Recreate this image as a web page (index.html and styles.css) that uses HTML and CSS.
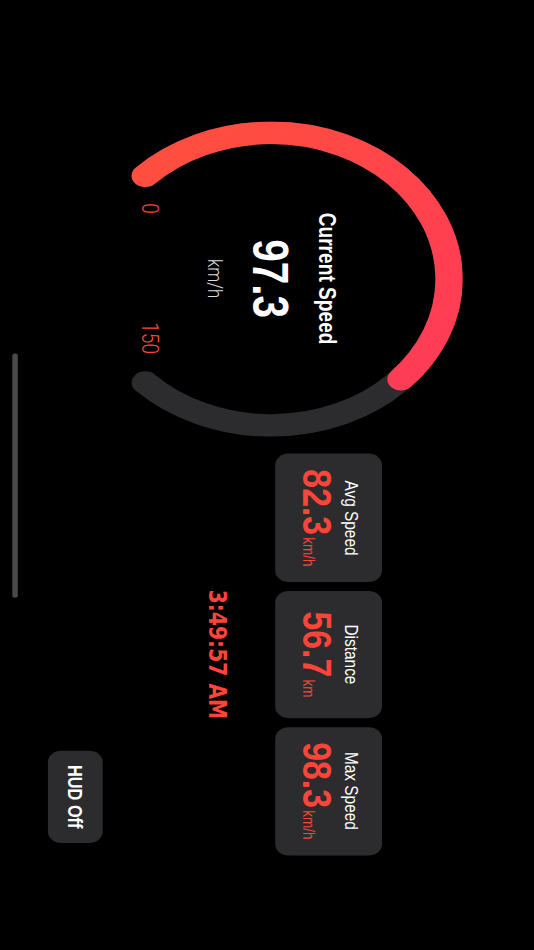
FILE: index.html
```html
<!DOCTYPE html>
<html lang="en">
<head>
<meta charset="utf-8">
<title>Speed HUD</title>
<link rel="stylesheet" href="styles.css">
</head>
<body>
<div class="stage">
<div class="frame">
  <div class="gauge">
    <svg class="gauge-svg" viewBox="0 0 280 280" preserveAspectRatio="none">
      <defs>
        <linearGradient id="redGrad" gradientUnits="userSpaceOnUse" x1="48" y1="232" x2="224" y2="40">
          <stop offset="0" stop-color="#FF4E3F"/>
          <stop offset="1" stop-color="#FF3C55"/>
        </linearGradient>
      </defs>
      <path d="M 48.08 231.92 A 130 130 0 1 1 231.92 231.92" fill="none" stroke="#2C2C2E" stroke-width="20" stroke-linecap="round"/>
      <path d="M 48.08 231.92 A 130 130 0 1 1 231.92 231.92" fill="none" stroke="url(#redGrad)" stroke-width="20" stroke-linecap="round" pathLength="100" stroke-dasharray="66 200"/>
    </svg>
    <div class="gauge-text">
      <div class="g-title">Current Speed</div>
      <div class="g-value">97.3</div>
      <div class="g-unit">km/h</div>
      <div class="g-scale"><span>0</span><span>150</span></div>
    </div>
  </div>
  <div class="side">
    <div class="cards">
      <div class="card">
        <div class="c-label">Avg Speed</div>
        <div class="c-row"><span class="c-value">82.3</span><span class="c-unit">km/h</span></div>
      </div>
      <div class="card">
        <div class="c-label">Distance</div>
        <div class="c-row"><span class="c-value">56.7</span><span class="c-unit">km</span></div>
      </div>
      <div class="card">
        <div class="c-label">Max Speed</div>
        <div class="c-row"><span class="c-value">98.3</span><span class="c-unit">km/h</span></div>
      </div>
    </div>
    <div class="clock">3:49:57 AM</div>
    <button class="hud">HUD Off</button>
  </div>
  <div class="home-indicator"></div>
</div>
</div>
</body>
</html>
```
FILE: styles.css
```css
html, body {
  margin: 0;
  padding: 0;
  background: #000;
}

.stage {
  width: 534px;
  height: 950px;
  overflow: hidden;
  position: relative;
}

.frame {
  width: 844px;
  height: 390px;
  transform-origin: 0 0;
  transform: translateX(534px) rotate(90deg) scale(1.12559, 1.36923);
  display: flex;
  align-items: flex-start;
  position: relative;
  font-family: "Liberation Sans", Arial, sans-serif;
  color: #fff;
}

.gauge {
  flex: none;
  width: 280px;
  height: 280px;
  margin-left: 107.5px;
  margin-top: 51.6px;
  display: grid;
}

.gauge-svg,
.gauge-text {
  grid-area: 1 / 1;
}

.gauge-svg {
  width: 280px;
  height: 280px;
  display: block;
}

.gauge-text {
  display: flex;
  flex-direction: column;
  align-items: center;
}

.g-title {
  margin-top: 90.3px;
  font-size: 17px;
  line-height: 20px;
  font-weight: 700;
}

.g-value {
  margin-top: 12.8px;
  font-size: 36px;
  line-height: 36px;
  font-weight: 700;
}

.g-unit {
  margin-top: 13px;
  font-family: Roboto, "Liberation Sans", sans-serif;
  font-weight: 300;
  font-size: 15px;
  line-height: 18px;
  color: #dcdcdc;
}

.g-scale {
  margin-top: 29px;
  width: 134px;
  display: flex;
  justify-content: space-between;
  font-family: Roboto, "Liberation Sans", sans-serif;
  font-weight: 300;
  font-size: 17px;
  line-height: 18px;
  color: #FF453A;
}

.side {
  flex: none;
  width: 356.3px;
  margin-left: 15.8px;
  margin-top: 111.2px;
  display: flex;
  flex-direction: column;
}

.cards {
  display: grid;
  grid-template-columns: repeat(3, 1fr);
  column-gap: 7.4px;
}

.card {
  height: 78px;
  background: #2C2C2E;
  border-radius: 10px;
  display: flex;
  flex-direction: column;
  align-items: center;
  padding-top: 14.35px;
  box-sizing: border-box;
}

.c-label {
  font-size: 13.7px;
  line-height: 16px;
  color: #fff;
}

.c-row {
  margin-top: 2.75px;
  display: flex;
  align-items: baseline;
  gap: 2px;
  line-height: 30px;
}

.c-value {
  font-size: 30px;
  font-weight: 700;
  color: #FF453A;
}

.c-unit {
  font-size: 12px;
  color: #FF453A;
}

.clock {
  margin-top: 30.6px;
  text-align: center;
  font-family: "DejaVu Sans", "Liberation Sans", sans-serif;
  font-size: 18px;
  line-height: 22px;
  font-weight: 700;
  color: #FF453A;
}

.hud {
  align-self: flex-end;
  margin-top: 72.8px;
  margin-right: 10.9px;
  width: 81.7px;
  height: 40.6px;
  border: none;
  border-radius: 10px;
  background: #2C2C2E;
  color: #fff;
  font-family: "Liberation Sans", Arial, sans-serif;
  font-size: 14.5px;
  font-weight: 700;
  padding: 0;
}

.home-indicator {
  position: absolute;
  left: 313.6px;
  top: 376.9px;
  width: 217px;
  height: 4.5px;
  border-radius: 3px;
  background: #4A4A4A;
}
```
